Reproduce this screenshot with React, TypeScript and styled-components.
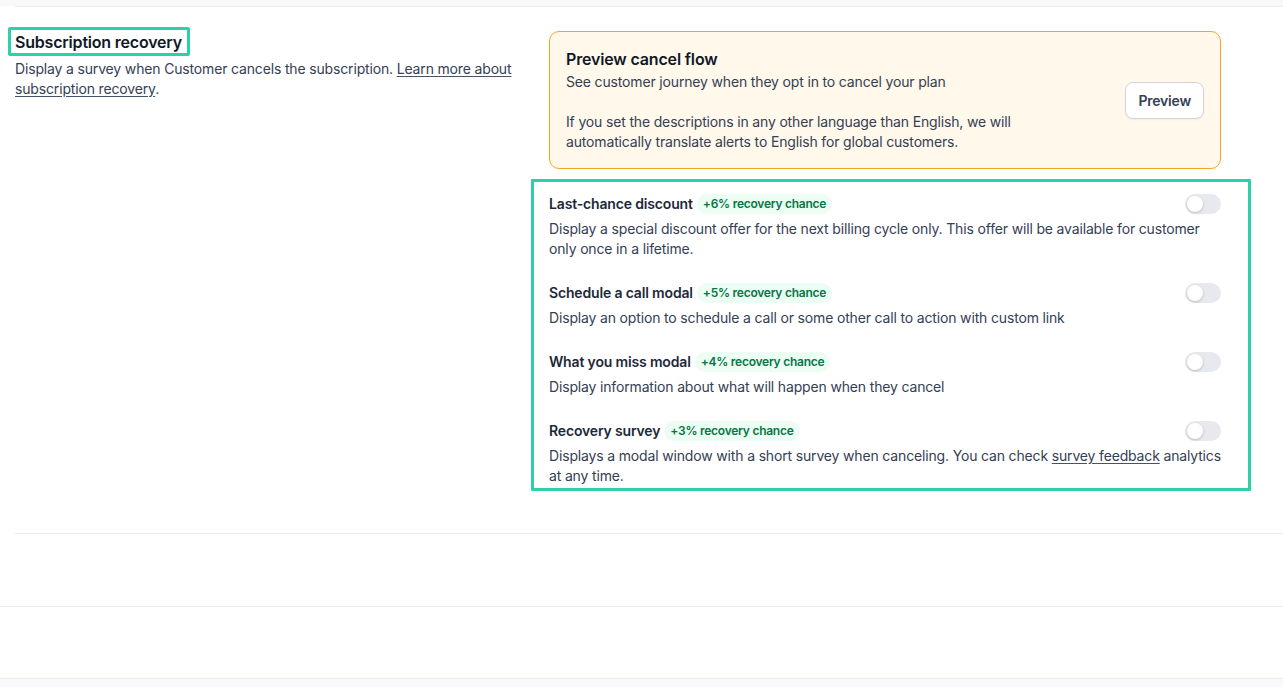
import React, { useState } from "react";
import styled, { createGlobalStyle } from "styled-components";

const GlobalStyle = createGlobalStyle`
  html, body {
    margin: 0;
    padding: 0;
    background: #ffffff;
  }
  body {
    font-family: Inter, "Noto Sans", "Liberation Sans", sans-serif;
    color: #101828;
    letter-spacing: -0.16px;
    -webkit-font-smoothing: antialiased;
  }
  * {
    box-sizing: border-box;
  }
`;

const Page = styled.div`
  padding-top: 6px;
  min-height: 687px;
  display: flex;
  flex-direction: column;
  background: #f8f9fb;
`;

const Main = styled.div`
  background: #ffffff;
`;

const Section = styled.section`
  margin-left: 15px;
  border-top: 1px solid #eaecf0;
  border-bottom: 1px solid #eaecf0;
  padding: 24px 0 47px;
  display: grid;
  grid-template-columns: 506px 672px;
  column-gap: 28px;
  align-items: start;
`;

const Intro = styled.div``;

const Highlight = styled.span`
  position: relative;
  display: inline-block;

  &::after {
    content: "";
    position: absolute;
    top: -4px;
    bottom: -3px;
    left: -7px;
    right: -8px;
    border: 3px solid #2dd0a8;
    border-radius: 2px;
    pointer-events: none;
  }
`;

const Heading = styled.h2`
  margin: 0;
  font-size: 16px;
  line-height: 22px;
  font-weight: 600;
  letter-spacing: -0.2px;
  color: #101828;
`;

const Muted = styled.p`
  margin: 6px 0 0;
  font-size: 14px;
  line-height: 20px;
  color: #344054;
`;

const TextLink = styled.a`
  color: inherit;
  text-decoration: underline;
  text-underline-offset: 2px;
  text-decoration-color: #475467;
  cursor: pointer;
`;

const Settings = styled.div`
  display: flex;
  flex-direction: column;
  gap: 25px;
`;

const PreviewCard = styled.div`
  display: flex;
  align-items: center;
  justify-content: space-between;
  gap: 24px;
  padding: 16px;
  background: #fff8eb;
  border: 1px solid #f5a524;
  border-radius: 10px;
`;

const CardText = styled.div`
  max-width: 470px;
`;

const CardTitle = styled.h3`
  margin: 0 0 2px;
  font-size: 16px;
  line-height: 22px;
  font-weight: 600;
  color: #101828;
`;

const CardLine = styled.p<{ $spaced?: boolean }>`
  margin: ${(p) => (p.$spaced ? "20px" : "0")} 0 0;
  font-size: 14px;
  line-height: 20px;
  color: #344054;
`;

const Button = styled.button`
  flex-shrink: 0;
  height: 37px;
  padding: 0 12px;
  background: #ffffff;
  border: 1px solid #d0d5dd;
  border-radius: 8px;
  box-shadow: 0 1px 2px rgba(16, 24, 40, 0.05);
  font-family: inherit;
  font-size: 14px;
  font-weight: 600;
  letter-spacing: -0.2px;
  color: #344054;
  cursor: pointer;
`;

const OptionList = styled.div`
  position: relative;
  display: flex;
  flex-direction: column;
  gap: 24px;

  &::after {
    content: "";
    position: absolute;
    top: -15px;
    left: -18px;
    right: -30px;
    bottom: -5px;
    border: 3px solid #2dd0a8;
    border-radius: 1px;
    pointer-events: none;
  }
`;

const Option = styled.div`
  display: flex;
  flex-direction: column;
  gap: 5px;
`;

const OptionHead = styled.div`
  display: flex;
  align-items: center;
  justify-content: space-between;
  height: 20px;
`;

const OptionTitle = styled.div`
  display: flex;
  align-items: center;
  gap: 4px;
  font-size: 14px;
  line-height: 20px;
  font-weight: 600;
  color: #1d2939;
`;

const Badge = styled.span`
  display: inline-flex;
  align-items: center;
  height: 20px;
  padding: 0 6px;
  border-radius: 10px;
  background: #ecfdf3;
  color: #067647;
  font-size: 12px;
  font-weight: 600;
  letter-spacing: -0.25px;
`;

const Toggle = styled.button<{ $on: boolean }>`
  position: relative;
  flex-shrink: 0;
  width: 36px;
  height: 20px;
  padding: 0;
  border: none;
  border-radius: 10px;
  background: ${(p) => (p.$on ? "#12b76a" : "#e8e9ee")};
  cursor: pointer;

  &::after {
    content: "";
    position: absolute;
    top: 2px;
    left: ${(p) => (p.$on ? "18px" : "2px")};
    width: 16px;
    height: 16px;
    border-radius: 50%;
    background: #ffffff;
    box-shadow: 0 1px 3px rgba(16, 24, 40, 0.15), 0 1px 2px rgba(16, 24, 40, 0.08);
    transition: left 0.15s ease;
  }
`;

const OptionDesc = styled.p`
  margin: 0;
  font-size: 14px;
  line-height: 20px;
  color: #344054;
`;

const Gap = styled.div<{ $h: number }>`
  height: ${(p) => p.$h}px;
  border-bottom: 1px solid #eaecf0;
`;

type Item = {
  title: string;
  chance: number;
  desc: React.ReactNode;
};

const items: Item[] = [
  {
    title: "Last-chance discount",
    chance: 6,
    desc: "Display a special discount offer for the next billing cycle only. This offer will be available for customer only once in a lifetime.",
  },
  {
    title: "Schedule a call modal",
    chance: 5,
    desc: "Display an option to schedule a call or some other call to action with custom link",
  },
  {
    title: "What you miss modal",
    chance: 4,
    desc: "Display information about what will happen when they cancel",
  },
  {
    title: "Recovery survey",
    chance: 3,
    desc: (
      <>
        Displays a modal window with a short survey when canceling. You can check{" "}
        <TextLink>survey feedback</TextLink> analytics at any time.
      </>
    ),
  },
];

export default function App() {
  const [enabled, setEnabled] = useState<boolean[]>(items.map(() => false));

  const flip = (i: number) =>
    setEnabled((prev) => prev.map((v, j) => (j === i ? !v : v)));

  return (
    <Page>
      <GlobalStyle />
      <Main>
        <Section>
          <Intro>
            <Heading>
              <Highlight>Subscription recovery</Highlight>
            </Heading>
            <Muted>
              Display a survey when Customer cancels the subscription.{" "}
              <TextLink>Learn more about subscription recovery</TextLink>.
            </Muted>
          </Intro>
          <Settings>
            <PreviewCard>
              <CardText>
                <CardTitle>Preview cancel flow</CardTitle>
                <CardLine>See customer journey when they opt in to cancel your plan</CardLine>
                <CardLine $spaced>
                  If you set the descriptions in any other language than English, we will
                  automatically translate alerts to English for global customers.
                </CardLine>
              </CardText>
              <Button>Preview</Button>
            </PreviewCard>
            <OptionList>
              {items.map((item, i) => (
                <Option key={item.title}>
                  <OptionHead>
                    <OptionTitle>
                      {item.title}
                      <Badge>+{item.chance}% recovery chance</Badge>
                    </OptionTitle>
                    <Toggle
                      $on={enabled[i]}
                      aria-label={item.title}
                      onClick={() => flip(i)}
                    />
                  </OptionHead>
                  <OptionDesc>{item.desc}</OptionDesc>
                </Option>
              ))}
            </OptionList>
          </Settings>
        </Section>
        <Gap $h={73} />
        <Gap $h={72} />
      </Main>
    </Page>
  );
}
